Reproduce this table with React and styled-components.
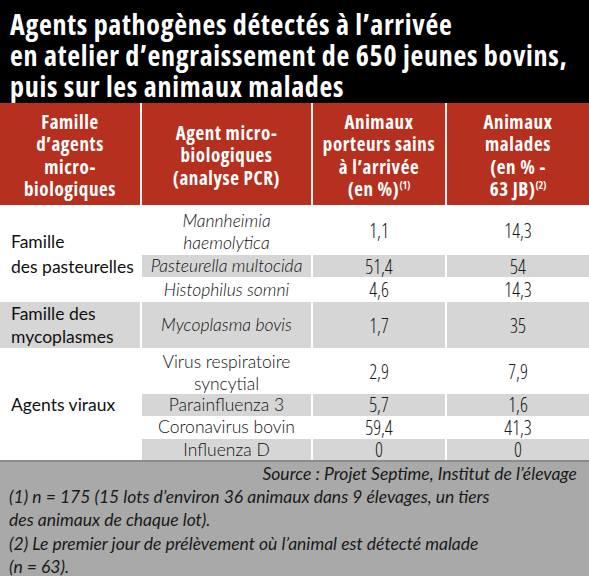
import styled, { createGlobalStyle } from "styled-components";

const Global = createGlobalStyle`
  html, body { margin: 0; padding: 0; background: #ffffff; }
`;

const Wrapper = styled.div`
  width: 589px;
  height: 576px;
  overflow: hidden;
  background: #ffffff;
  display: flex;
  flex-direction: column;
`;

const Title = styled.h1`
  margin: 0;
  height: 103px;
  flex: none;
  box-sizing: border-box;
  padding: 9px 4px 0 10px;
  background: #000000;
  color: #ffffff;
  font-family: "Open Sans", sans-serif;
  font-stretch: 75%;
  font-weight: 700;
  font-size: 28px;
  letter-spacing: 0.7px;
  line-height: 31px;
  white-space: nowrap;
`;

const Table = styled.table`
  width: 589px;
  flex: none;
  border-collapse: collapse;
  table-layout: fixed;
`;

const HeadRow = styled.tr`
  height: 102px;
`;

const Th = styled.th`
  background: #b5301e;
  color: #ffffff;
  padding: 3px 0 0;
  border-left: ${(p) => (p.$first ? "none" : "2px solid #f3f3f3")};
  font-family: "Open Sans", sans-serif;
  font-stretch: 75%;
  font-weight: 700;
  font-size: 19px;
  letter-spacing: 0.6px;
  line-height: 22.5px;
  text-align: center;
  vertical-align: middle;
  white-space: nowrap;

  sup {
    font-size: 10px;
    letter-spacing: 0;
    vertical-align: 7px;
    line-height: 0;
  }
`;

const Row = styled.tr`
  height: ${(p) => p.$h}px;
`;

const Td = styled.td`
  background: ${(p) => (p.$gray ? "#d6d6d6" : "#ffffff")};
  border-left: ${(p) => (p.$first ? "none" : "2px solid #ffffff")};
  padding: 0 4px;
  color: #1a1a1a;
  text-align: center;
  vertical-align: middle;
  font-family: "Open Sans", sans-serif;
  font-stretch: 75%;
  font-weight: 300;
  font-size: 19.5px;
  line-height: 21px;
`;

const Family = styled(Td)`
  text-align: left;
  padding-left: 11px;
  font-family: "Lato", sans-serif;
  font-stretch: normal;
  font-weight: 400;
  font-size: 17.5px;
  line-height: ${(p) => (p.$tall ? 25 : 23)}px;
  color: #111;
`;

const Agent = styled(Td)`
  padding-top: ${(p) => (p.$lines > 1 ? 3 : 0)}px;
  font-family: "Lato", sans-serif;
  font-stretch: normal;
  font-style: ${(p) => (p.$italic ? "italic" : "normal")};
  font-weight: 300;
  font-size: 17.5px;
  line-height: 21.5px;
  color: #111;
  white-space: nowrap;
`;

const Footer = styled.div`
  height: 118px;
  flex: none;
  box-sizing: border-box;
  background: #a9a9a9;
  border-top: 2px solid #8c8c8c;
  padding: 0 12px 0 9px;
  font-family: "Lato", sans-serif;
  font-style: italic;
  font-size: 17.5px;
  line-height: 23.2px;
  color: #1a1a1a;
`;

const Source = styled.div`
  text-align: right;
`;

const rows = [
  { family: "Famille\ndes pasteurelles", span: 3, tall: true, agent: "Mannheimia\nhaemolytica", italic: true, a: "1,1", b: "14,3", h: 50 },
  { agent: "Pasteurella multocida", italic: true, a: "51,4", b: "54", h: 22, gray: true },
  { agent: "Histophilus somni", italic: true, a: "4,6", b: "14,3", h: 25 },
  { family: "Famille des\nmycoplasmes", span: 1, agent: "Mycoplasma bovis", italic: true, a: "1,7", b: "35", h: 46, gray: true, familyGray: true },
  { family: "Agents viraux", span: 4, agent: "Virus respiratoire\nsyncytial", a: "2,9", b: "7,9", h: 44 },
  { agent: "Parainfluenza 3", a: "5,7", b: "1,6", h: 21, gray: true },
  { agent: "Coronavirus bovin", a: "59,4", b: "41,3", h: 23 },
  { agent: "Influenza D", a: "0", b: "0", h: 21, gray: true },
];

const lines = (t) =>
  t.split("\n").map((l, i) => (
    <span key={i}>
      {i > 0 && <br />}
      {l}
    </span>
  ));

export default function App() {
  return (
    <>
      <Global />
      <Wrapper>
        <Title>
          Agents pathogènes détectés à l’arrivée
          <br />
          en atelier d’engraissement de 650 jeunes bovins,
          <br />
          puis sur les animaux malades
        </Title>
        <Table>
          <colgroup>
            <col style={{ width: 141 }} />
            <col style={{ width: 171 }} />
            <col style={{ width: 134 }} />
            <col style={{ width: 143 }} />
          </colgroup>
          <thead>
            <HeadRow>
              <Th $first>Famille<br />d’agents<br />micro-<br />biologiques</Th>
              <Th>Agent micro-<br />biologiques<br />(analyse PCR)</Th>
              <Th>Animaux<br />porteurs sains<br />à l’arrivée<br />(en %)<sup>(1)</sup></Th>
              <Th>Animaux<br />malades<br />(en % -<br />63 JB)<sup>(2)</sup></Th>
            </HeadRow>
          </thead>
          <tbody>
            {rows.map((r, i) => (
              <Row key={i} $h={r.h}>
                {r.family && (
                  <Family $first rowSpan={r.span} $gray={r.familyGray} $tall={r.tall}>
                    {lines(r.family)}
                  </Family>
                )}
                <Agent
                  $gray={r.gray}
                  $italic={r.italic}
                  $lines={r.agent.split("\n").length}
                >
                  {lines(r.agent)}
                </Agent>
                <Td $gray={r.gray}>{r.a}</Td>
                <Td $gray={r.gray}>{r.b}</Td>
              </Row>
            ))}
          </tbody>
        </Table>
        <Footer>
          <Source>Source : Projet Septime, Institut de l’élevage</Source>
          (1) n = 175 (15 lots d’environ 36 animaux dans 9 élevages, un tiers
          <br />
          des animaux de chaque lot).
          <br />
          (2) Le premier jour de prélèvement où l’animal est détecté malade
          <br />
          (n = 63).
        </Footer>
      </Wrapper>
    </>
  );
}
